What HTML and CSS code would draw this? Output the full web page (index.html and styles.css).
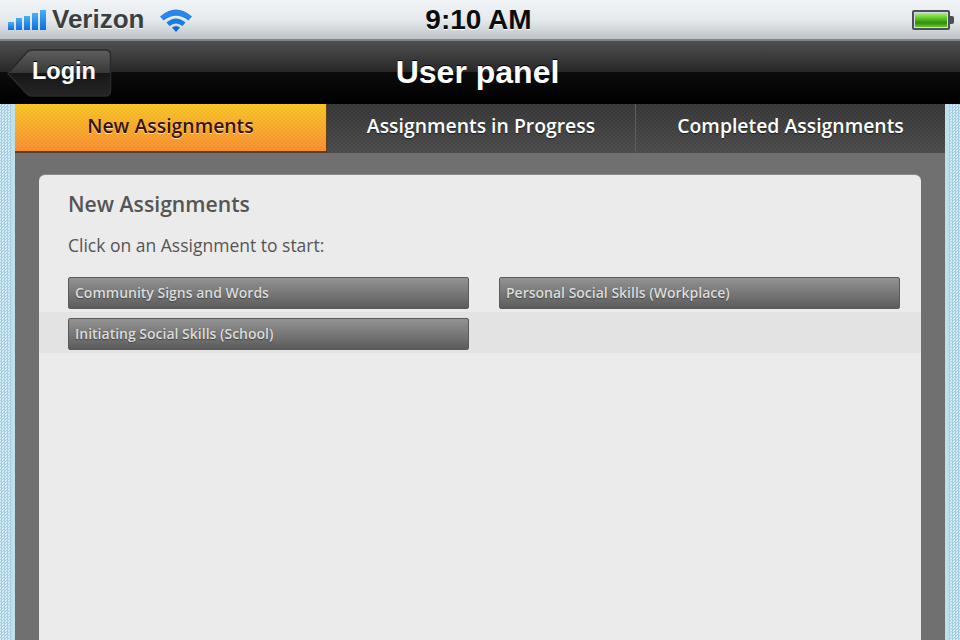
FILE: index.html
```html
<!DOCTYPE html>
<html lang="en">
<head>
    <meta charset="UTF-8">
    <meta name="viewport" content="width=device-width, initial-scale=1.0">
    <title>User panel</title>
    <link rel="stylesheet" href="styles.css">
</head>
<body>
    <div class="status-bar">
        <div class="status-left">
            <svg class="signal" width="39" height="20" viewBox="0 0 39 20">
                <defs>
                    <linearGradient id="blue" x1="0" y1="0" x2="0" y2="1">
                        <stop offset="0" stop-color="#4aaef5"/>
                        <stop offset="1" stop-color="#0a6fe0"/>
                    </linearGradient>
                </defs>
                <rect x="0" y="12" width="6" height="8" fill="url(#blue)"/>
                <rect x="8" y="8" width="6" height="12" fill="url(#blue)"/>
                <rect x="16" y="6" width="6" height="14" fill="url(#blue)"/>
                <rect x="24" y="3" width="6" height="17" fill="url(#blue)"/>
                <rect x="32" y="0" width="6" height="20" fill="url(#blue)"/>
            </svg>
            <span class="carrier">Verizon</span>
            <svg class="wifi" width="32" height="24" viewBox="0 0 32 24">
                <path d="M0 8.500 Q16 -5.500 32 8.500 L28.500 12.500 Q16 3 3.500 12.500 Z" fill="#2a86ea"/>
                <path d="M6.500 14.500 Q16 6.500 25.500 14.500 L22.500 18 Q16 13 9.500 18 Z" fill="#1c7ce6"/>
                <path d="M12 19.500 Q16 16.500 20 19.500 L16 24 Z" fill="#0f68d8"/>
            </svg>
        </div>
        <div class="clock">9:10 AM</div>
        <div class="status-right">
            <div class="battery"><div class="battery-fill"></div></div>
            <div class="battery-tip"></div>
        </div>
    </div>

    <div class="nav-bar">
        <div class="nav-side">
            <div class="back-btn">
                <svg class="back-shape" width="105" height="49" viewBox="0 0 105 49">
                    <defs>
                        <linearGradient id="backfill" x1="0" y1="0" x2="0" y2="1">
                            <stop offset="0" stop-color="#5e5e5e"/>
                            <stop offset="0.5" stop-color="#383838"/>
                            <stop offset="0.5" stop-color="#161616"/>
                            <stop offset="1" stop-color="#262626"/>
                        </linearGradient>
                    </defs>
                    <path d="M1 24.500 L20 3 Q22 1 25 1 L98 1 Q103.500 1 103.500 6 L103.500 42 Q103.500 47 98 47 L25 47 Q22 47 20 45 Z" fill="url(#backfill)" stroke="#2a2a2a" stroke-width="1.5"/>
                </svg>
                <span class="back-label">Login</span>
            </div>
        </div>
        <div class="nav-title">User panel</div>
        <div class="nav-side"></div>
    </div>

    <div class="page">
        <div class="panel">
            <div class="tabs">
                <div class="tab tab-active">New Assignments</div>
                <div class="tab tab-mid">Assignments in Progress</div>
                <div class="tab tab-last">Completed Assignments</div>
            </div>
            <div class="card">
                <h2>New Assignments</h2>
                <p>Click on an Assignment to start:</p>
                <div class="row">
                    <div class="assignment">Community Signs and Words</div>
                    <div class="assignment">Personal Social Skills (Workplace)</div>
                </div>
                <div class="row row-alt">
                    <div class="assignment">Initiating Social Skills (School)</div>
                </div>
            </div>
        </div>
    </div>
</body>
</html>
```

FILE: styles.css
```css
html, body {
    margin: 0;
    padding: 0;
    height: 640px;
    overflow: hidden;
}

body {
    width: 960px;
    font-family: "Open Sans", sans-serif;
    background-color: #000;
}

/* status bar */
.status-bar {
    height: 39px;
    display: grid;
    grid-template-columns: 1fr auto 1fr;
    align-items: center;
    background: linear-gradient(#f0f4f6, #e6eaec 50%, #bcc3c7);
    border-bottom: 2px solid #7f858a;
}

.status-left {
    display: flex;
    align-items: center;
    padding-left: 8px;
}

.signal {
    margin-right: 5px;
}

.carrier {
    font-family: "Liberation Sans", Arial, sans-serif;
    font-size: 26px;
    font-weight: bold;
    color: #3c3f42;
    text-shadow: 0 1px 0 #fff;
}

.wifi {
    margin-left: 16px;
}

.clock {
    font-family: "Liberation Sans", Arial, sans-serif;
    font-size: 28px;
    font-weight: bold;
    color: #0c0c0c;
    text-shadow: 0 1px 0 #fff;
    margin-left: -3px;
}

.status-right {
    display: flex;
    align-items: center;
    justify-content: flex-end;
    padding-right: 6px;
}

.battery {
    width: 32px;
    height: 14px;
    border: 2px solid #4a5058;
    border-radius: 2px;
    background: #d5dade;
    padding: 1px;
    display: flex;
}

.battery-fill {
    flex: 1;
    background: linear-gradient(#b4ec7c, #62cc2a 35%, #2f8f0c 70%, #6cc42c);
}

.battery-tip {
    width: 4px;
    height: 8px;
    background: #4a5058;
    border-radius: 0 2px 2px 0;
}

/* nav bar */
.nav-bar {
    height: 62px;
    display: grid;
    grid-template-columns: 1fr auto 1fr;
    align-items: center;
    background: linear-gradient(#505050, #272727 50%, #0c0c0c 50%, #000);
    border-bottom: 1px solid #000;
}

.nav-side {
    display: flex;
    padding-left: 7px;
}

.back-btn {
    position: relative;
    width: 105px;
    height: 49px;
    display: flex;
    align-items: center;
    justify-content: center;
    margin-top: 2px;
}

.back-shape {
    position: absolute;
    left: 0;
    top: 0;
}

.back-label {
    position: relative;
    font-family: "Liberation Sans", Arial, sans-serif;
    font-size: 23.500px;
    font-weight: bold;
    color: #fff;
    margin-left: 9px;
    margin-top: -4px;
    text-shadow: 0 -1px 0 #000;
}

.nav-title {
    font-family: "Liberation Sans", Arial, sans-serif;
    font-size: 32px;
    font-weight: bold;
    color: #fff;
    margin-left: -5px;
    text-shadow: 0 -1px 0 #000;
}

/* page */
.page {
    height: 537px;
    padding: 0 15px;
    background-color: #bcdcea;
    background-image: repeating-conic-gradient(#a3cde0 0 25%, #d6ebf3 0 50%);
    background-size: 3px 3px;
}

.panel {
    height: 100%;
    background-color: #707070;
    box-shadow: -4px 0 0 #bfdfeb, 4px 0 0 #bfdfeb;
}

.tabs {
    display: grid;
    grid-template-columns: 312px 309px 309px;
    height: 49px;
}

.tab {
    display: flex;
    align-items: center;
    justify-content: center;
    font-size: 19.400px;
    font-weight: 600;
    color: #fff;
    background-image:
        repeating-conic-gradient(rgba(255, 255, 255, 0.03) 0 25%, rgba(0, 0, 0, 0.03) 0 50%),
        linear-gradient(#363636, #4a4a4a);
    background-size: 4px 4px, auto;
    border-bottom: 2px solid #4c4c4c;
    box-sizing: border-box;
    padding-bottom: 5px;
    text-shadow: 0 1px 1px #222;
}

.tab-active {
    color: #3c1204;
    background-image:
        repeating-conic-gradient(rgba(255, 255, 255, 0.04) 0 25%, rgba(0, 0, 0, 0.02) 0 50%),
        linear-gradient(#f8c623, #f88d30);
    border-right: 1px solid #5c4020;
    border-bottom: 2px solid #5c4020;
    text-shadow: 0 1px 0 #ffe9b0;
}

.tab-mid {
    border-right: 1px solid #5e5e5e;
}

/* card */
.card {
    margin: 22px 24px 0;
    height: 470px;
    background-color: #ebebeb;
    border-radius: 6px 6px 0 0;
    padding-top: 14px;
    box-sizing: border-box;
    box-shadow: 0 -1px 0 #8a8a8a;
}

.card h2 {
    margin: 0 0 0 29px;
    font-size: 21.200px;
    line-height: 30px;
    font-weight: 600;
    color: #555;
}

.card p {
    margin: 14px 0 0 29px;
    font-size: 17.500px;
    line-height: 24px;
    color: #555;
}

.row {
    display: grid;
    grid-template-columns: 401px 401px;
    column-gap: 30px;
    padding: 6px 0 3px 29px;
}

.card p + .row {
    margin-top: 14px;
}

.row-alt {
    background-color: #e3e3e3;
}

.assignment {
    height: 32px;
    box-sizing: border-box;
    padding: 0 6px 2px;
    display: flex;
    align-items: center;
    font-size: 14px;
    font-weight: 600;
    color: #dcdcdc;
    background: linear-gradient(#939393, #5c5c5c);
    border: 1px solid #5a5a5a;
    border-radius: 2px;
    text-shadow: 0 1px 1px #444;
}
```
